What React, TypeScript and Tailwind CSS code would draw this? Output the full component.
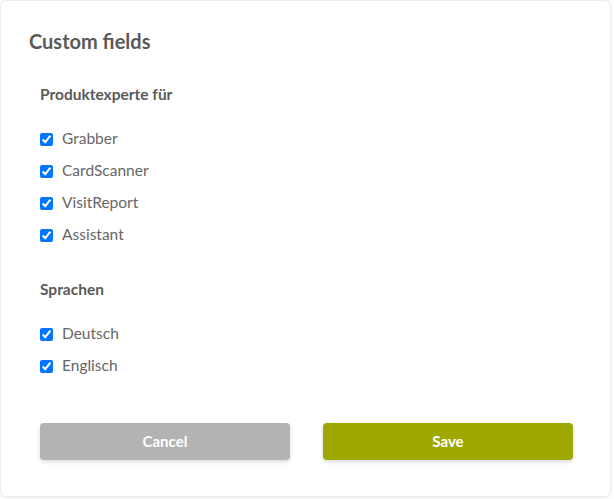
import { useState } from "react";

const groups = [
  { title: "Produktexperte für", items: ["Grabber", "CardScanner", "VisitReport", "Assistant"] },
  { title: "Sprachen", items: ["Deutsch", "Englisch"] },
];

function CheckRow({ label }: { label: string }) {
  const [checked, setChecked] = useState(true);
  return (
    <label className="flex items-center h-[32px] gap-[9px] cursor-pointer">
      <input
        type="checkbox"
        checked={checked}
        onChange={(e) => setChecked(e.target.checked)}
        className="w-[13px] h-[13px] m-0 accent-[#0075ff]"
      />
      <span className="text-[15.5px] text-[#666666]">{label}</span>
    </label>
  );
}

export default function App() {
  return (
    <div className="w-[614px] h-[499px] bg-white" style={{ fontFamily: "Lato, 'Open Sans', sans-serif" }}>
      <div className="w-[611px] h-[497px] bg-white rounded-md border border-[#ececec] shadow-[0_1px_3px_rgba(0,0,0,0.08)] pt-[28px] pl-[28px] pr-[20px]">
        {/* Title */}
        <h2 className="text-[20px] leading-[24px] font-bold text-[#5a5a5a]">Custom fields</h2>

        <div className="pl-[11px] pt-[31px]">
          {groups.map((group, i) => (
            <div key={group.title} className={i > 0 ? "mt-[28px]" : ""}>
              <h3 className="text-[15.5px] leading-[20px] font-bold text-[#5a5a5a]">{group.title}</h3>
              <div className="mt-[19px]">
                {group.items.map((item) => (
                  <CheckRow key={item} label={item} />
                ))}
              </div>
            </div>
          ))}

          {/* Buttons */}
          <div className="flex gap-[33px] mt-[41px]">
            <button className="w-[250px] h-[37px] shrink-0 rounded-[4px] bg-[#b3b3b3] text-white text-[15px] font-bold shadow-[0_2px_4px_rgba(0,0,0,0.15)]">
              Cancel
            </button>
            <button className="w-[250px] h-[37px] shrink-0 rounded-[4px] bg-[#9fa800] text-white text-[15px] font-bold shadow-[0_2px_4px_rgba(0,0,0,0.15)]">
              Save
            </button>
          </div>
        </div>
      </div>
    </div>
  );
}
